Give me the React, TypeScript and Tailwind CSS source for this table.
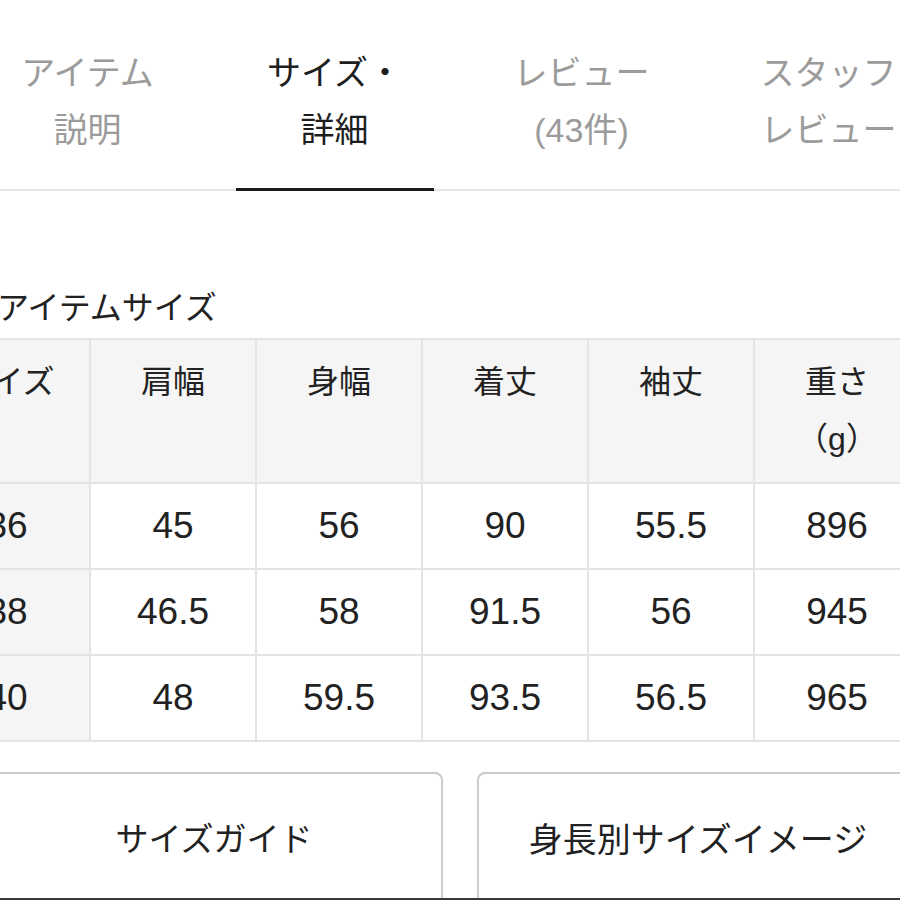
import React from "react";

const tabs = [
  { l1: "アイテム", l2: "説明", active: false },
  { l1: "サイズ・", l2: "詳細", active: true },
  { l1: "レビュー", l2: "(43件)", active: false },
  { l1: "スタッフ", l2: "レビュー", active: false },
];

const headers: string[][] = [
  ["サイズ"],
  ["肩幅"],
  ["身幅"],
  ["着丈"],
  ["袖丈"],
  ["重さ", "（g）"],
];

const rows = [
  ["36", "45", "56", "90", "55.5", "896"],
  ["38", "46.5", "58", "91.5", "56", "945"],
  ["40", "48", "59.5", "93.5", "56.5", "965"],
];

export default function App() {
  return (
    <div
      className="relative w-[900px] h-[900px] overflow-hidden bg-white text-[#222]"
      style={{ fontFamily: '"Liberation Sans", "Noto Sans CJK JP", sans-serif' }}
    >
      {/* Tabs */}
      <div className="border-b-2 border-[#e6e6e6]">
        <div className="flex -ml-[36px]">
          {tabs.map((t, i) => (
            <div
              key={i}
              className={`relative shrink-0 w-[247px] pt-[45px] pb-[30px] text-center text-[34px] leading-[57px] ${
                t.active ? "text-[#1e1e1e]" : "text-[#9b9b9b]"
              }`}
            >
              <div className="whitespace-nowrap">{t.l1}</div>
              <div className="whitespace-nowrap">{t.l2}</div>
              {t.active && (
                <span className="absolute left-[25px] right-[24px] -bottom-[2px] h-[3px] bg-[#1a1a1a]" />
              )}
            </div>
          ))}
        </div>
      </div>

      {/* Heading */}
      <div className="pt-[96px]">
        <div className="-ml-[3px] text-[32px] leading-[42px] text-[#222]">アイテムサイズ</div>
      </div>

      {/* Table */}
      <div className="mt-[9px] -ml-[77px]">
        <table className="table-fixed border-collapse w-[998px]">
          <colgroup>
            {headers.map((_, i) => (
              <col key={i} className="w-[166px]" />
            ))}
          </colgroup>
          <thead>
            <tr>
              {headers.map((h, i) => (
                <th
                  key={i}
                  className="h-[144px] align-top pt-[14px] border-2 border-[#e4e4e4] bg-[#f5f5f5] text-[32px] leading-[57px] font-normal text-[#222]"
                >
                  {h.map((line, j) => (
                    <div key={j}>{line}</div>
                  ))}
                </th>
              ))}
            </tr>
          </thead>
          <tbody>
            {rows.map((r, ri) => (
              <tr key={ri}>
                {r.map((v, ci) => (
                  <td
                    key={ci}
                    className={`h-[86px] align-middle text-center border-2 border-[#e4e4e4] text-[37px] text-[#222] ${
                      ci === 0 ? "bg-[#f5f5f5]" : "bg-white"
                    }`}
                  >
                    {v}
                  </td>
                ))}
              </tr>
            ))}
          </tbody>
        </table>
      </div>

      {/* Buttons */}
      <div className="mt-[30px] -ml-[15px] flex gap-[34px]">
        <div className="shrink-0 w-[458px] h-[150px] rounded-[8px] border-2 border-[#cbcbcb] pt-[44px] text-center text-[33px] leading-[44px] text-[#222]">
          サイズガイド
        </div>
        <div className="shrink-0 w-[458px] h-[150px] rounded-[8px] border-2 border-[#cbcbcb] pt-[44px] pr-[16px] text-center text-[34px] leading-[44px] text-[#222]">
          身長別サイズイメージ
        </div>
      </div>

      <div className="absolute left-0 right-0 bottom-0 h-[2px] bg-[#3a3a3a]" />
    </div>
  );
}
